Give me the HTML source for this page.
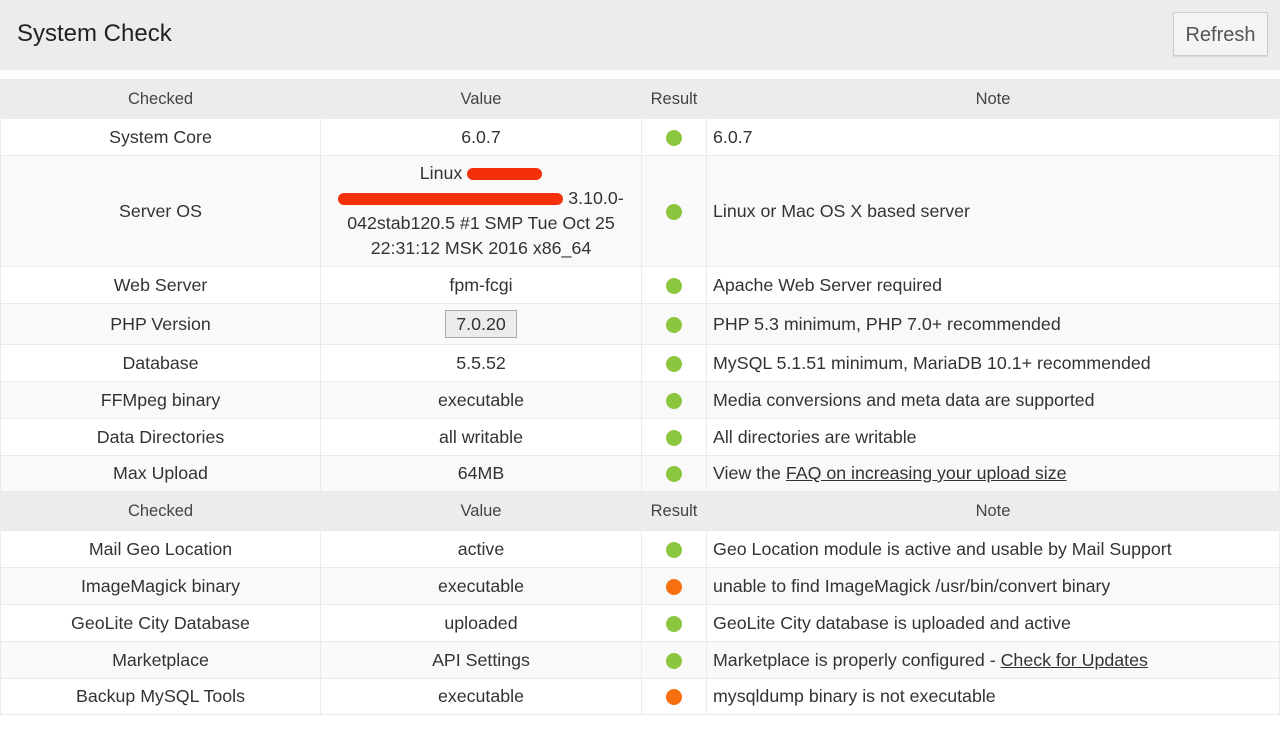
<!DOCTYPE html>
<html><head><meta charset="utf-8"><style>
*{margin:0;padding:0;box-sizing:border-box}
body{width:1280px;height:729px;background:#fff;font-family:"Liberation Sans",sans-serif;color:#333;overflow:hidden;position:relative}
.top{position:absolute;left:0;top:0;width:1280px;height:70px;background:#ececec}
.top h1{position:absolute;left:17px;top:20px;font-weight:normal;font-size:24px;color:#222}
.btn{position:absolute;left:1173px;top:12px;width:95px;height:44px;border:1px solid #ccc;background:#f4f4f4;border-radius:2px;font-size:20px;color:#555;text-align:center;line-height:44px;box-shadow:0 1px 1px rgba(0,0,0,.1)}
table{position:absolute;left:0;top:79px;width:1280px;border-collapse:collapse;table-layout:fixed;font-size:17.8px}
td{border:1px solid #ebebeb;text-align:center;vertical-align:middle;padding:0 6px;color:#333;white-space:nowrap}
td.n{text-align:left}
tr.h td{background:#ececec;color:#444;font-size:16.5px;border-color:#ececec;height:39px}
tr.a td{background:#fff}
tr.b td{background:#f9f9f9}
.d{display:inline-block;width:16px;height:16px;border-radius:50%;background:#8cc63f;vertical-align:middle}
.o{background:#f7700f}
u{text-decoration:underline}
.pv{display:inline-block;border:1px solid #aaa;background:#ececec;padding:2px 10px;line-height:22px}
.red{display:inline-block;background:#f3300a;height:12px;border-radius:6px;vertical-align:middle}
</style></head><body>
<div class="top"><h1>System Check</h1><div class="btn">Refresh</div></div>
<table>
<colgroup><col style="width:320px"><col style="width:321px"><col style="width:65px"><col></colgroup>
<tr class="h"><td>Checked</td><td>Value</td><td>Result</td><td>Note</td></tr>
<tr class="a" style="height:37px"><td>System Core</td><td>6.0.7</td><td><span class="d"></span></td><td class="n">6.0.7</td></tr>
<tr class="b" style="height:111px"><td>Server OS</td><td style="line-height:25px">Linux <span class="red" style="width:75px"></span><br><span class="red" style="width:225px"></span> 3.10.0-<br>042stab120.5 #1 SMP Tue Oct 25<br>22:31:12 MSK 2016 x86_64</td><td><span class="d"></span></td><td class="n">Linux or Mac OS X based server</td></tr>
<tr class="a" style="height:37px"><td>Web Server</td><td>fpm-fcgi</td><td><span class="d"></span></td><td class="n">Apache Web Server required</td></tr>
<tr class="b" style="height:41px"><td>PHP Version</td><td><span class="pv">7.0.20</span></td><td><span class="d"></span></td><td class="n">PHP 5.3 minimum, PHP 7.0+ recommended</td></tr>
<tr class="a" style="height:37px"><td>Database</td><td>5.5.52</td><td><span class="d"></span></td><td class="n">MySQL 5.1.51 minimum, MariaDB 10.1+ recommended</td></tr>
<tr class="b" style="height:37px"><td>FFMpeg binary</td><td>executable</td><td><span class="d"></span></td><td class="n">Media conversions and meta data are supported</td></tr>
<tr class="a" style="height:37px"><td>Data Directories</td><td>all writable</td><td><span class="d"></span></td><td class="n">All directories are writable</td></tr>
<tr class="b" style="height:36px"><td>Max Upload</td><td>64MB</td><td><span class="d"></span></td><td class="n">View the <u>FAQ on increasing your upload size</u></td></tr>
<tr class="h"><td>Checked</td><td>Value</td><td>Result</td><td>Note</td></tr>
<tr class="a" style="height:37px"><td>Mail Geo Location</td><td>active</td><td><span class="d"></span></td><td class="n">Geo Location module is active and usable by Mail Support</td></tr>
<tr class="b" style="height:37px"><td>ImageMagick binary</td><td>executable</td><td><span class="d o"></span></td><td class="n">unable to find ImageMagick /usr/bin/convert binary</td></tr>
<tr class="a" style="height:37px"><td>GeoLite City Database</td><td>uploaded</td><td><span class="d"></span></td><td class="n">GeoLite City database is uploaded and active</td></tr>
<tr class="b" style="height:37px"><td>Marketplace</td><td>API Settings</td><td><span class="d"></span></td><td class="n">Marketplace is properly configured - <u>Check for Updates</u></td></tr>
<tr class="a" style="height:36px"><td>Backup MySQL Tools</td><td>executable</td><td><span class="d o"></span></td><td class="n">mysqldump binary is not executable</td></tr>
</table>
</body></html>
